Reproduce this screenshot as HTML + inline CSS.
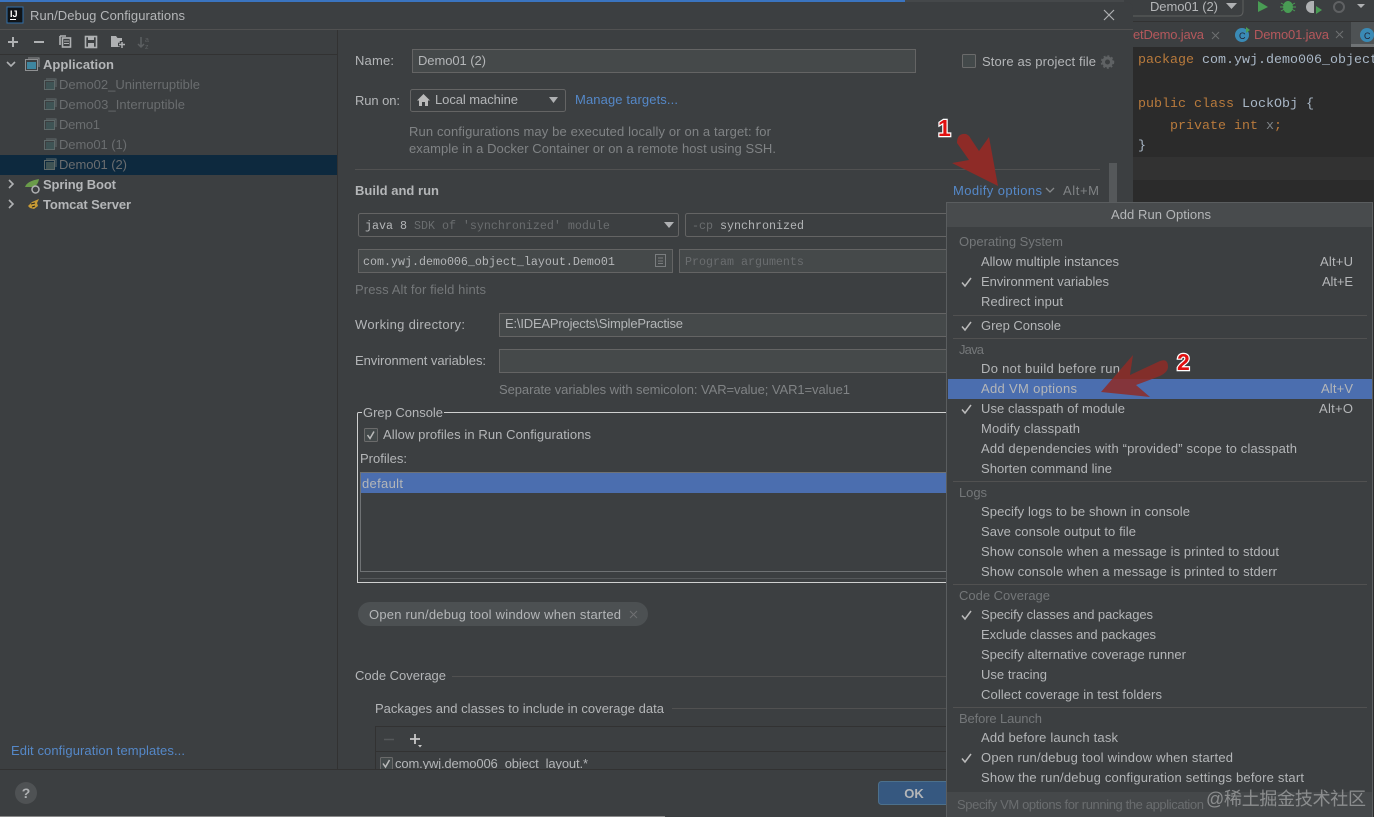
<!DOCTYPE html>
<html><head><meta charset="utf-8"><title>Run/Debug Configurations</title>
<style>
html,body{margin:0;padding:0;background:#3c3f41;width:1374px;height:817px;overflow:hidden}
svg{display:block;filter:blur(.35px)}
text{font-family:"Liberation Sans","Noto Sans CJK SC",sans-serif;font-size:13px;fill:#b4b6b8}
.m{font-family:"Liberation Mono",monospace;font-size:11.67px}
.c{font-family:"Liberation Mono",monospace;font-size:13.33px;fill:#a9b7c6}
.k{fill:#b87a3c}
.g{fill:#808385}
.d{fill:#6a6d6f}
.h{fill:#747779}
.l{fill:#5588c8}
.b{font-weight:bold}
.r{fill:#b5585c}
.f{fill:#45494a;stroke:#646464}
.n{fill:none;stroke:#646464}
.s{stroke:#515151;stroke-width:1}
.i{fill:none;stroke:#afb1b3;stroke-width:1.6}
.ck{fill:none;stroke:#bbb;stroke-width:1.5}
.num{font-weight:bold;font-size:23px;fill:#e01010;stroke:#fff;stroke-width:2.4px;paint-order:stroke}
</style></head><body>
<svg width="1374" height="817" viewBox="0 0 1374 817" xmlns="http://www.w3.org/2000/svg">
<rect width="1374" height="817" fill="#3c3f41"/>
<!-- top strip -->
<rect x="0" y="0" width="905" height="2" fill="#3a74c0"/>
<rect x="905" y="0" width="228" height="2" fill="#45484a"/>
<!-- IDE right -->
<rect x="1124" y="0" width="250" height="22" fill="#3c3f41"/>
<rect x="1133" y="22" width="241" height="25" fill="#3c3f41"/>
<rect x="1351" y="22" width="23" height="25" fill="#4e5254"/>
<rect x="1351" y="44" width="23" height="3" fill="#6f7375"/>
<rect x="1133" y="47" width="241" height="770" fill="#2b2b2b"/>
<rect x="1133" y="157" width="241" height="23" fill="#323232"/>
<rect x="1133" y="21" width="241" height="1" fill="#323232"/>
<path d="M1133 16H1238Q1243 16 1243 11V0" fill="none" stroke="#5e6060"/>
<text x="1150" y="11" textLength="68">Demo01 (2)</text>
<path d="M1226 3h11l-5.500 6z" fill="#afb1b3"/>
<path d="M1258 1L1268 7L1258 12z" fill="#499c54"/>
<ellipse cx="1288" cy="7" rx="5" ry="6" fill="#499c54"/>
<path d="M1281 3l14 8M1295 3l-14 8M1280 7h16" stroke="#499c54"/>
<path d="M1312 1a6 6 0 0 0 0 12h2V1z" fill="#afb1b3"/>
<path d="M1316 6l6 4-6 4z" fill="#499c54"/>
<circle cx="1339" cy="7" r="5" fill="none" stroke="#5f6163" stroke-width="2"/>
<path d="M1357 4h8l-4 4z" fill="#afb1b3"/>
<text x="1133" y="39" class="r" textLength="71">etDemo.java</text>
<path d="M1212 32l7 7M1219 32l-7 7" stroke="#6e7072"/>
<circle cx="1242" cy="35" r="7" fill="#3a8ab5"/>
<text x="1239" y="39" style="font-size:9px;fill:#223" >C</text>
<path d="M1246 27l4 3-4 3z" fill="#499c54"/>
<text x="1254" y="39" class="r" textLength="75">Demo01.java</text>
<path d="M1336 31l7 7M1343 31l-7 7" stroke="#6e7072"/>
<circle cx="1367" cy="35" r="7" fill="#3a8ab5"/>
<text x="1364" y="39" style="font-size:9px;fill:#223">C</text>
<text x="1138" y="63" class="c"><tspan class="k">package</tspan> com.ywj.demo006_object</text>
<text x="1138" y="107" class="c"><tspan class="k">public class</tspan> LockObj {</text>
<text x="1170" y="129" class="c"><tspan class="k">private int</tspan> <tspan fill="#7f8488">x</tspan><tspan class="k">;</tspan></text>
<text x="1138" y="149" class="c">}</text>

<!-- dialog -->
<path d="M0 2H1125Q1133 2 1133 10V817H0z" fill="#3c3f41"/>
<rect x="337" y="30" width="1" height="739" fill="#323232"/>
<rect x="0" y="29" width="1133" height="1" fill="#515151"/>
<rect x="7" y="7" width="16" height="16" fill="#101418" stroke="#2f6ea8"/>
<text x="10" y="17" style="font-size:9px;font-weight:bold;fill:#fff">IJ</text>
<rect x="10" y="19" width="6" height="1" fill="#fff"/>
<text x="30" y="20" textLength="155">Run/Debug Configurations</text>
<path d="M1104 10l10 10M1114 10l-10 10" stroke="#afb1b3" stroke-width="1.2"/>

<!-- left toolbar -->
<rect x="0" y="54" width="337" height="1" fill="#323232"/>
<path d="M8 42h10M13 37v10" stroke="#afb1b3" stroke-width="2"/>
<path d="M34 42h10" stroke="#afb1b3" stroke-width="2"/>
<path d="M60 36h6M60 36v9" class="i"/><rect x="62.500" y="38" width="8" height="9" class="i"/><path d="M64 41h5M64 43.500h5" stroke="#afb1b3"/>
<rect x="85.500" y="36.500" width="11" height="11" class="i"/><rect x="88" y="37" width="6" height="3" fill="#afb1b3"/><rect x="88" y="43" width="6" height="4" fill="#afb1b3"/>
<path d="M111 36h5l1.500 2H122v9h-11z" fill="#afb1b3"/><path d="M118 44.500h7M121.500 41v7" stroke="#3c3f41" stroke-width="3.500"/><path d="M119 44.500h6M122 42v6" stroke="#afb1b3" stroke-width="1.500"/>
<path d="M141 37v10M138 44l3 3 3-3" fill="none" stroke="#5d6062" stroke-width="1.500"/>
<text x="145" y="42" style="font-size:7px;fill:#5d6062">a</text><text x="145" y="49" style="font-size:7px;fill:#5d6062">z</text>

<!-- tree -->
<rect x="0" y="155" width="337" height="20" fill="#0d293e"/>
<path d="M7 62l4 4 4-4" class="i" stroke-width="1.300"/>
<path d="M9 180l4 4-4 4M9 200l4 4-4 4" class="i" stroke-width="1.300"/>
<rect x="25.500" y="59.500" width="12" height="11" fill="none" stroke="#8f9193"/><path d="M28 58h11v9" fill="none" stroke="#8f9193"/><rect x="27" y="62" width="9" height="7" fill="#3e86a0"/>
<text x="43" y="69" class="b" textLength="71">Application</text>
<g fill="none" stroke="#5f6a6a">
<rect x="44.500" y="80.500" width="10" height="9"/><path d="M46 79h10v8"/>
<rect x="44.500" y="100.500" width="10" height="9"/><path d="M46 99h10v8"/>
<rect x="44.500" y="120.500" width="10" height="9"/><path d="M46 119h10v8"/>
<rect x="44.500" y="140.500" width="10" height="9"/><path d="M46 139h10v8"/>
<rect x="44.500" y="160.500" width="10" height="9"/><path d="M46 159h10v8"/>
</g>
<g fill="#3e5354"><rect x="46" y="82" width="8" height="7"/><rect x="46" y="102" width="8" height="7"/><rect x="46" y="122" width="8" height="7"/><rect x="46" y="142" width="8" height="7"/><rect x="46" y="162" width="8" height="7"/></g>
<text x="59" y="89" class="d" textLength="141">Demo02_Uninterruptible</text>
<text x="59" y="109" class="d" textLength="126">Demo03_Interruptible</text>
<text x="59" y="129" class="d" textLength="41">Demo1</text>
<text x="59" y="149" class="d" textLength="68">Demo01 (1)</text>
<text x="59" y="169" class="d" textLength="68">Demo01 (2)</text>
<path d="M25 187Q27 181 39 179Q38 186 32 187z" fill="#6a9c4a"/>
<circle cx="35.500" cy="189.500" r="3.500" fill="#3c3f41" stroke="#afb1b3" stroke-width="1.500"/>
<text x="43" y="189" class="b" textLength="73">Spring Boot</text>
<path d="M28 206l4-4 7-3-2 4 1 3-4 3-4-1z" fill="#c79a35"/><path d="M31 204l4-1M32 207l3-1" stroke="#222"/>
<text x="43" y="209" class="b" textLength="88">Tomcat Server</text>

<!-- bottom left -->
<text x="11" y="755" class="l" textLength="174">Edit configuration templates...</text>

<!-- main -->
<text x="355" y="65" textLength="39">Name:</text>
<rect x="412.500" y="49.500" width="503" height="23" class="f"/>
<text x="418" y="65" textLength="68">Demo01 (2)</text>
<rect x="962.500" y="54.500" width="13" height="13" rx="1" fill="#43494a" stroke="#6b6b6b"/>
<text x="982" y="66" textLength="114">Store as project file</text>
<circle cx="1107.500" cy="62" r="4" fill="none" stroke="#5f6264" stroke-width="3"/><circle cx="1107.500" cy="62" r="6" fill="none" stroke="#5f6264" stroke-width="1.500" stroke-dasharray="2 2"/>
<text x="355" y="105" textLength="45">Run on:</text>
<rect x="410.500" y="89.500" width="155" height="22" rx="2" class="n"/>
<path d="M423.500 94L430 100.500H428V106H425V102H422V106H419V100.500H417z" fill="#bbb"/>
<text x="435" y="104" textLength="83">Local machine</text>
<path d="M549 97h9l-4.500 6z" fill="#afb1b3"/>
<text x="575" y="104" class="l" textLength="103">Manage targets...</text>
<text x="409" y="136" class="g" textLength="362">Run configurations may be executed locally or on a target: for</text>
<text x="409" y="153" class="g" textLength="367">example in a Docker Container or on a remote host using SSH.</text>
<path d="M355 169.500H1100" class="s"/>
<text x="355" y="195" class="b" textLength="84">Build and run</text>
<text x="953" y="195" class="l" textLength="89">Modify options</text>
<path d="M1046 188l4 4 4-4" fill="none" stroke="#85888a" stroke-width="1.300"/>
<text x="1063" y="195" class="g" textLength="36">Alt+M</text>
<rect x="1109" y="163" width="8" height="40" fill="#55585a"/>

<rect x="358.500" y="213.500" width="320" height="23" rx="2" class="n"/>
<text x="365" y="229" class="m">java 8 <tspan fill="#6a6d6f">SDK of 'synchronized' module</tspan></text>
<path d="M664 222h10l-5 6z" fill="#afb1b3"/>
<rect x="685.500" y="213.500" width="300" height="23" rx="2" class="n"/>
<text x="692" y="229" class="m"><tspan fill="#6a6d6f">-cp</tspan> synchronized</text>
<rect x="358.500" y="249.500" width="314" height="23" class="f"/>
<text x="363" y="265" class="m">com.ywj.demo006_object_layout.Demo01</text>
<rect x="655.500" y="254.500" width="10" height="12" fill="none" stroke="#7a7d7f"/><path d="M658 258h5M658 261h5M658 263.500h5" stroke="#7a7d7f"/>
<rect x="679.500" y="249.500" width="300" height="23" class="f"/>
<text x="685" y="265" class="m" style="fill:#6a6d6f">Program arguments</text>
<text x="355" y="294" class="h" textLength="131">Press Alt for field hints</text>
<text x="355" y="329" textLength="110">Working directory:</text>
<rect x="499.500" y="313.500" width="480" height="23" class="f"/>
<text x="505" y="328" textLength="178">E:\IDEAProjects\SimplePractise</text>
<text x="355" y="365" textLength="131">Environment variables:</text>
<rect x="499.500" y="349.500" width="480" height="23" class="f"/>
<text x="499" y="394" class="g" textLength="351">Separate variables with semicolon: VAR=value; VAR1=value1</text>

<!-- Grep console -->
<path d="M362 412.500H358.500Q357.500 412.500 357.500 414V582.500H980M444 412.500H980" fill="none" stroke="#cfd0d0"/>
<text x="363" y="417" textLength="80">Grep Console</text>
<rect x="364.500" y="428.500" width="13" height="13" rx="1" fill="#43494a" stroke="#6b6b6b"/>
<path d="M367.500 435l2.500 3.500 4-7" class="ck"/>
<text x="383" y="439" textLength="208">Allow profiles in Run Configurations</text>
<text x="360" y="463" textLength="47">Profiles:</text>
<rect x="360.500" y="472.500" width="620" height="99" fill="none" stroke="#6f7274"/>
<rect x="361" y="473" width="620" height="20" fill="#4b6eaf"/>
<text x="362" y="488" textLength="41">default</text>
<path d="M360 578.500H980" stroke="#55585a"/>
<rect x="358" y="602" width="290" height="24" rx="12" fill="#4c5052"/>
<text x="369" y="619" textLength="252">Open run/debug tool window when started</text>
<path d="M630 611l7 7M637 611l-7 7" stroke="#6e7072"/>
<text x="355" y="680" textLength="91">Code Coverage</text>
<path d="M452 676.500H980" class="s"/>
<text x="375" y="713" textLength="289">Packages and classes to include in coverage data</text>
<path d="M672 708.500H980" class="s"/>
<path d="M375.500 769V726.500H980M375 751.500H980" fill="none" stroke="#323232"/>
<path d="M384 739.500h10" stroke="#55585a" stroke-width="1.500"/>
<path d="M410 739h10M415 734v10" stroke="#c8c8c8" stroke-width="1.800"/><path d="M418 745h4l-2 2.500z" fill="#c8c8c8"/>
<rect x="380.500" y="757.500" width="12" height="12" rx="1" fill="#43494a" stroke="#6b6b6b"/>
<path d="M383 763.500l2.500 3.500 4-7" class="ck"/>
<text x="395" y="768" textLength="193">com.ywj.demo006_object_layout.*</text>

<!-- bottom cover -->
<rect x="0" y="769" width="1133" height="48" fill="#3c3f41"/>
<rect x="0" y="769" width="947" height="1" fill="#323232"/>
<circle cx="26" cy="793" r="11" fill="#4f5254"/>
<text x="26" y="798" text-anchor="middle" class="b" style="font-size:14px;fill:#afb1b3">?</text>
<rect x="878.500" y="781.500" width="80" height="23" rx="3" fill="#365880" stroke="#4c708c"/>
<text x="914" y="798" text-anchor="middle" class="b">OK</text>
<rect x="0" y="816" width="665" height="1" fill="#8a8a8a"/>

<!-- popup -->
<rect x="946.500" y="202.500" width="426" height="620" fill="#3c3f41" stroke="#5a5d5f"/>
<rect x="947" y="203" width="425" height="24" fill="#484b4d"/>
<text x="1161" y="219" text-anchor="middle" textLength="100">Add Run Options</text>
<rect x="948" y="379" width="424" height="20" fill="#4b6eaf"/>
<g stroke="#515151">
<path d="M953 315.500H1367M953 338.500H1367M953 481.500H1367M953 584.500H1367M953 707.500H1367"/>
</g>
<text x="959" y="246" class="h" textLength="104">Operating System</text>
<text x="981" y="266" textLength="138">Allow multiple instances</text>
<text x="981" y="286" textLength="128">Environment variables</text>
<text x="981" y="306" textLength="82">Redirect input</text>
<text x="981" y="330" textLength="80">Grep Console</text>
<text x="959" y="354" class="h" textLength="25">Java</text>
<text x="981" y="373" textLength="139">Do not build before run</text>
<text x="981" y="393" textLength="96">Add VM options</text>
<text x="981" y="413" textLength="144">Use classpath of module</text>
<text x="981" y="433" textLength="99">Modify classpath</text>
<text x="981" y="453" textLength="316">Add dependencies with “provided” scope to classpath</text>
<text x="981" y="473" textLength="131">Shorten command line</text>
<text x="959" y="497" class="h" textLength="28">Logs</text>
<text x="981" y="516" textLength="209">Specify logs to be shown in console</text>
<text x="981" y="536" textLength="155">Save console output to file</text>
<text x="981" y="556" textLength="298">Show console when a message is printed to stdout</text>
<text x="981" y="576" textLength="296">Show console when a message is printed to stderr</text>
<text x="959" y="600" class="h" textLength="91">Code Coverage</text>
<text x="981" y="619" textLength="172">Specify classes and packages</text>
<text x="981" y="639" textLength="175">Exclude classes and packages</text>
<text x="981" y="659" textLength="205">Specify alternative coverage runner</text>
<text x="981" y="679" textLength="66">Use tracing</text>
<text x="981" y="699" textLength="181">Collect coverage in test folders</text>
<text x="959" y="723" class="h" textLength="83">Before Launch</text>
<text x="981" y="742" textLength="137">Add before launch task</text>
<text x="981" y="762" textLength="252">Open run/debug tool window when started</text>
<text x="981" y="782" textLength="323">Show the run/debug configuration settings before start</text>
<g text-anchor="end">
<text x="1353" y="266" textLength="33">Alt+U</text>
<text x="1353" y="286" textLength="31">Alt+E</text>
<text x="1353" y="393" textLength="32">Alt+V</text>
<text x="1353" y="413" textLength="34">Alt+O</text>
</g>
<g class="ck">
<path d="M962 282.500l3 3.500 6-8"/>
<path d="M962 326.500l3 3.500 6-8"/>
<path d="M962 409.500l3 3.500 6-8"/>
<path d="M962 615.500l3 3.500 6-8"/>
<path d="M962 758.500l3 3.500 6-8"/>
</g>
<rect x="947" y="792" width="425" height="25" fill="#45484a"/>
<text x="957" y="809" class="d" textLength="247">Specify VM options for running the application</text>
<text x="1206" y="805" style="font-size:18px;fill:#ffffff;fill-opacity:.38;font-family:'Liberation Sans','Noto Sans CJK SC',sans-serif" textLength="160">@稀土掘金技术社区</text>

<!-- annotations -->
<path d="M957 143Q957 133 966 134Q969 135 971 139L979 151L989 137L998 186L952 163L969 160z" fill="#8e2b27"/>
<path d="M1101 392L1133 355L1130 375L1160 361Q1168 358 1168 367Q1168 372 1160 376L1136 385L1150 397z" fill="#8e2b27" fill-opacity=".85"/>
<text x="938" y="136" class="num">1</text>
<text x="1177" y="370" class="num">2</text>
</svg>
</body></html>
